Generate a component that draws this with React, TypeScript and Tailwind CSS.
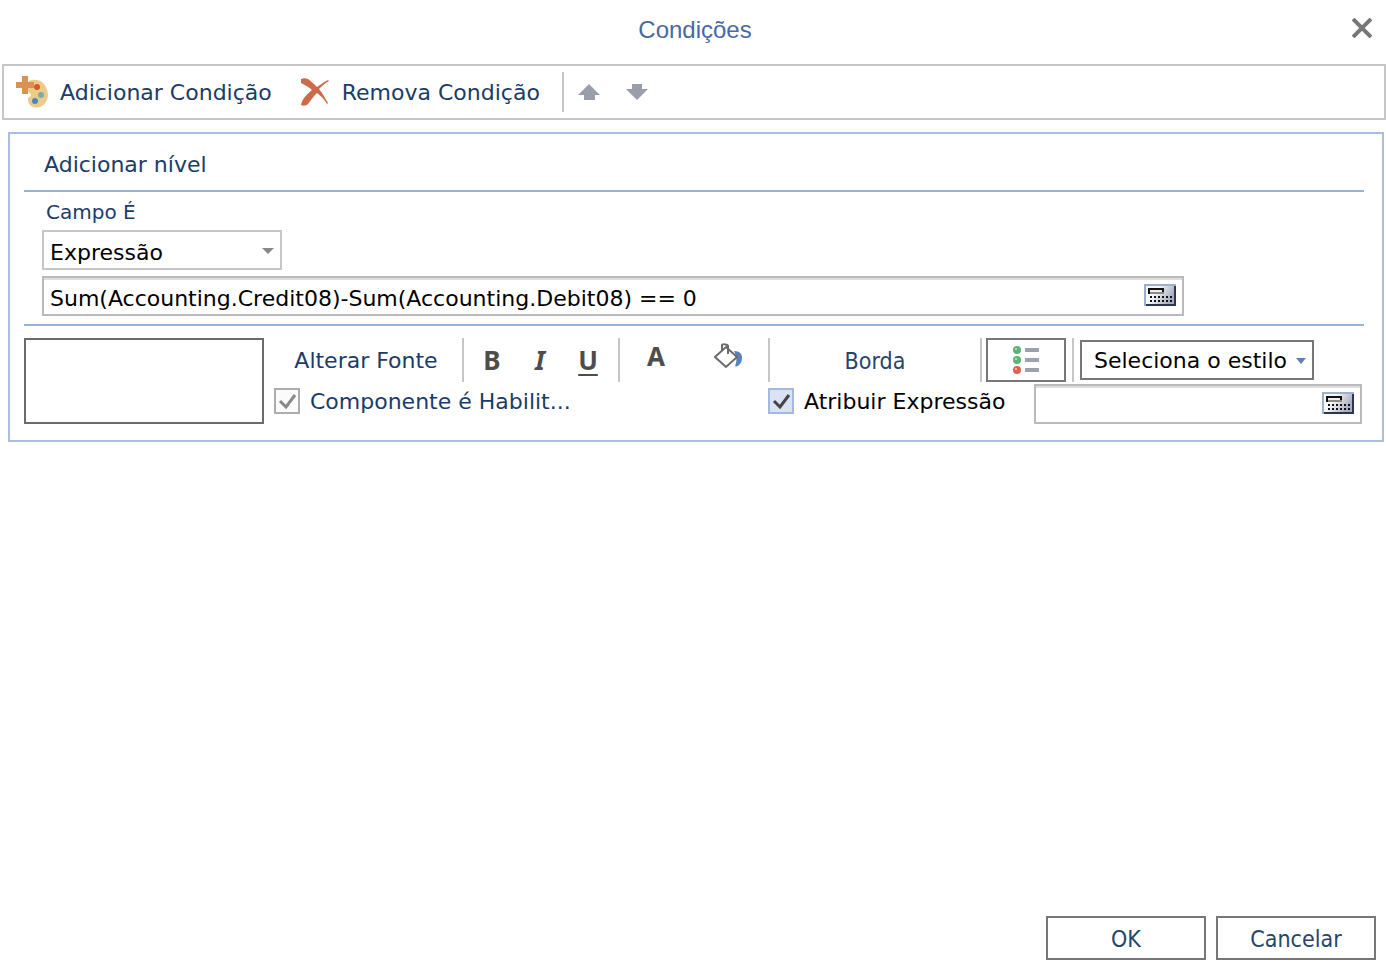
import type { ReactNode } from "react";

function PaletteIcon() {
  return (
    <svg width="32" height="32" viewBox="0 0 32 32" aria-hidden="true">
      <path
        d="M13 5c4-2 10-2 14 2 5 5 6 12 4 17-3 6-8 9-14 7-4-2-5-5-5-8 0-2 3-2 3-4 0-2-3-2-3-5z"
        fill="#e9cc86"
      />
      <path d="M6 0h6v6h6v6h-6v6H6v-6H0V6h6z" fill="#dc9150" />
      <circle cx="21" cy="11" r="3" fill="#e0532c" />
      <circle cx="25" cy="19" r="3" fill="#82aaa0" />
      <circle cx="19" cy="25" r="3" fill="#4f84c4" />
    </svg>
  );
}

function RemoveIcon() {
  return (
    <svg width="30" height="28" viewBox="0 0 30 28" aria-hidden="true">
      <path
        d="M1 1c2-1 5-1 7 0 3 2 6 5 9 8 4-3 7-5 11-7l1 1c-4 2-7 5-10 8 4 5 6 9 9 14l-1 1c-3-5-6-8-10-11-4 4-6 7-9 11-2 2-5 2-7 1 1-6 6-11 11-15C9 9 5 7 1 5z"
        fill="#ce6a4c"
      />
    </svg>
  );
}

function CalculatorIcon() {
  return (
    <svg width="32" height="22" viewBox="0 0 32 22" shapeRendering="crispEdges" aria-hidden="true">
      <defs>
        <linearGradient id="calc" x1="0" y1="0" x2="1" y2="0.4">
          <stop offset="0.4" stopColor="#f6f9fc" />
          <stop offset="1" stopColor="#a9adbf" />
        </linearGradient>
      </defs>
      <path d="M0 0h32v22H0z" fill="#9cb0ca" />
      <path d="M30 2h2v20H2v-2h28z" fill="#2c3654" />
      <path d="M2 2h28v18H2z" fill="url(#calc)" />
      <path d="M4 4h16v6H4z" fill="#111" />
      <path d="M6 6h12v2H6z" fill="#eee" />
      <path d="M6 8h14v2H6z" fill="#8c8b86" />
      <path d="M6 13h24M6 17h24" stroke="#111" strokeWidth="2" strokeDasharray="2 2" />
    </svg>
  );
}

function BucketIcon() {
  return (
    <svg width="28" height="26" viewBox="0 0 28 26" fill="none" aria-hidden="true">
      <path d="M20 8c6 0 8 3 8 7 0 4-2 6-3 7-1 1-3 2-4 1 2-4 2-9-1-15z" fill="#5583bd" />
      <path d="M12 4l11 10-11 10L1 14z" fill="#fff" stroke="#6b6b6b" strokeWidth="2" />
      <path d="M8 8V2c0-1 6-1 6 1v8" stroke="#6b6b6b" strokeWidth="2" />
    </svg>
  );
}

function ListIcon() {
  return (
    <svg width="28" height="28" viewBox="0 0 28 28" aria-hidden="true">
      <circle cx="5" cy="4" r="4" fill="#5cb573" />
      <circle cx="5" cy="14" r="4" fill="#5cb573" />
      <circle cx="5" cy="24" r="4" fill="#e2604a" />
      <path d="M3 2h2v2H3zM3 12h2v2H3zM3 22h2v2H3z" fill="#fff" opacity="0.5" />
      <path d="M13 4h14M13 14h14M13 24h14" stroke="#9ba2ad" strokeWidth="4" />
    </svg>
  );
}

function Separator({ className = "" }: { className?: string }) {
  return <div className={`w-0.5 shrink-0 bg-[#c6c6c6] ${className}`} />;
}

function ExpressionInput({ label, value, className = "" }: { label: string; value: string; className?: string }) {
  return (
    <div className={`flex h-10 items-center border-2 border-[#b8babb] bg-white pr-1.5 shadow-[inset_0_2px_0_#dedede] ${className}`}>
      <input aria-label={label} defaultValue={value} className="h-full min-w-0 flex-1 bg-transparent pl-1.5 pt-1 text-black outline-none" />
      <button type="button" aria-label="Editar expressão" className="pb-0.5">
        <CalculatorIcon />
      </button>
    </div>
  );
}

type CheckboxProps = { label: string; boxClass: string; textClass: string; color: string };

function Checkbox({ label, boxClass, textClass, color }: CheckboxProps) {
  return (
    <label className={`flex items-center gap-2.5 ${textClass}`}>
      <span className="relative flex">
        <input type="checkbox" defaultChecked className={`peer size-[26px] appearance-none border-2 ${boxClass}`} />
        <svg
          className="pointer-events-none absolute inset-0 hidden peer-checked:block"
          width="26"
          height="26"
          viewBox="0 0 26 26"
          fill="none"
          aria-hidden="true"
        >
          <path d="M6 13l6 6L21 7" stroke={color} strokeWidth="3" />
        </svg>
      </span>
      <span className="pt-0.5">{label}</span>
    </label>
  );
}

function FormatButton({ label, className = "", children }: { label: string; className?: string; children: ReactNode }) {
  return (
    <button
      type="button"
      aria-label={label}
      className={`flex items-center justify-center font-['Noto_Sans',sans-serif] text-[26px] font-bold text-[#4d4d4d] ${className}`}
    >
      {children}
    </button>
  );
}

export default function App() {
  return (
    <div className="flex min-h-screen flex-col bg-white font-['DejaVu_Sans',sans-serif] text-[22px] leading-7 text-[#1b3c69]">
      <header className="relative flex h-16 items-center justify-center pb-1 pl-1">
        <h1 className="font-['Liberation_Sans',sans-serif] text-2xl text-[#4a68a2]">Condições</h1>
        <button type="button" aria-label="Fechar" className="absolute right-3.5 top-[18px]">
          <svg width="20" height="20" viewBox="0 0 20 20" stroke="#777" strokeWidth="4" aria-hidden="true">
            <path d="M1 1l18 18M19 1L1 19" />
          </svg>
        </button>
      </header>

      <div className="ml-0.5 flex h-14 items-center border-2 border-[#c6c6c6] pl-3">
        <button type="button" className="flex items-center gap-3">
          <PaletteIcon />
          <span className="pt-0.5">Adicionar Condição</span>
        </button>
        <button type="button" className="ml-7 flex items-center gap-3">
          <RemoveIcon />
          <span className="pt-0.5">Remova Condição</span>
        </button>
        <Separator className="ml-[22px] mr-3.5 h-10" />
        <button type="button" aria-label="Mover para cima">
          <svg width="22" height="16" viewBox="0 0 22 16" fill="#9a9daa" aria-hidden="true">
            <path d="M11 0l11 11h-5v5H6v-5H0z" />
          </svg>
        </button>
        <button type="button" aria-label="Mover para baixo" className="ml-[26px]">
          <svg width="22" height="16" viewBox="0 0 22 16" fill="#9a9daa" aria-hidden="true">
            <path d="M11 16L0 5h6V0h10v5h6z" />
          </svg>
        </button>
      </div>

      <main className="ml-2 mr-0.5 mt-3 border-2 border-[#abbde0] pb-4 pl-3.5 pr-[18px]">
        <div className="flex h-[58px] items-center border-b-2 border-[#99b3d4] pl-5 pt-1.5">
          <button type="button">Adicionar nível</button>
        </div>

        <section className="border-b-2 border-[#99b3d4] pb-2 pl-[18px] pt-1.5">
          <label htmlFor="field" className="block pl-1 text-xl leading-7">
            Campo É
          </label>
          <div className="relative mb-1.5 mt-1 w-60">
            <select id="field" className="block h-10 w-full appearance-none border-2 border-[#c6c6c6] bg-white pl-1.5 pt-1.5 text-black">
              <option>Expressão</option>
            </select>
            <svg className="pointer-events-none absolute right-2 top-[18px]" width="12" height="6" viewBox="0 0 12 6" fill="#888" aria-hidden="true">
              <path d="M0 0h12L6 6z" />
            </svg>
          </div>
          <ExpressionInput label="Expressão" value="Sum(Accounting.Credit08)-Sum(Accounting.Debit08) == 0" className="mr-[180px]" />
        </section>

        <section className="flex gap-2.5 pt-3">
          <div className="h-[86px] w-60 shrink-0 border-2 border-[#6b6b6b]" />
          <div className="min-w-0 flex-1">
            <div className="flex h-11">
              <button type="button" className="w-[188px] pr-1 pt-0.5">
                Alterar Fonte
              </button>
              <Separator />
              <div className="flex px-1">
                <FormatButton label="Negrito" className="w-12">B</FormatButton>
                <FormatButton label="Itálico" className="w-12 italic">I</FormatButton>
                <FormatButton label="Sublinhado" className="w-12 underline decoration-2 underline-offset-4">U</FormatButton>
              </div>
              <Separator className="ml-0.5" />
              <div className="flex pb-2 pr-1">
                <FormatButton label="Cor do texto" className="w-[72px]">A</FormatButton>
                <FormatButton label="Cor de fundo" className="w-[72px]">
                  <BucketIcon />
                </FormatButton>
              </div>
              <Separator />
              <button type="button" className="w-[210px] pt-0.5 font-['DejaVu_Sans_Condensed','DejaVu_Sans',sans-serif] text-[23px] text-[#25466b]">
                Borda
              </button>
              <Separator />
              <button type="button" aria-label="Ícones" className="mx-1 flex w-20 items-center justify-center border-2 border-[#777]">
                <ListIcon />
              </button>
              <Separator className="ml-0.5" />
              <div className="relative ml-1.5 mt-0.5 w-[234px]">
                <select aria-label="Estilo" className="block h-10 w-full appearance-none border-2 border-[#777] bg-white pl-3 pt-0.5 text-black">
                  <option>Seleciona o estilo</option>
                </select>
                <svg className="pointer-events-none absolute right-2 top-[18px]" width="10" height="6" viewBox="0 0 10 6" fill="#5f7fb5" aria-hidden="true">
                  <path d="M0 0h10L5 6z" />
                </svg>
              </div>
            </div>

            <div className="mt-0.5 flex pr-0.5">
              <div className="flex w-[494px] pb-1.5">
                <Checkbox label="Componente é Habilit..." boxClass="border-[#adadad] bg-[#fbfbfb]" textClass="" color="#888" />
              </div>
              <div className="flex w-[266px] pb-1.5">
                <Checkbox label="Atribuir Expressão" boxClass="border-[#a3b9e0] bg-[#dae3f3]" textClass="text-black" color="#444" />
              </div>
              <ExpressionInput label="Atribuir Expressão" value="" className="min-w-0 flex-1" />
            </div>
          </div>
        </section>
      </main>

      <footer className="mt-auto flex justify-end gap-2.5 pb-3.5 pr-2.5 font-['DejaVu_Sans_Condensed','DejaVu_Sans',sans-serif] text-[23px] text-[#25466b]">
        <button type="button" className="h-11 w-40 border-2 border-[#777] pt-0.5">OK</button>
        <button type="button" className="h-11 w-40 border-2 border-[#777] pt-0.5">Cancelar</button>
      </footer>
    </div>
  );
}
